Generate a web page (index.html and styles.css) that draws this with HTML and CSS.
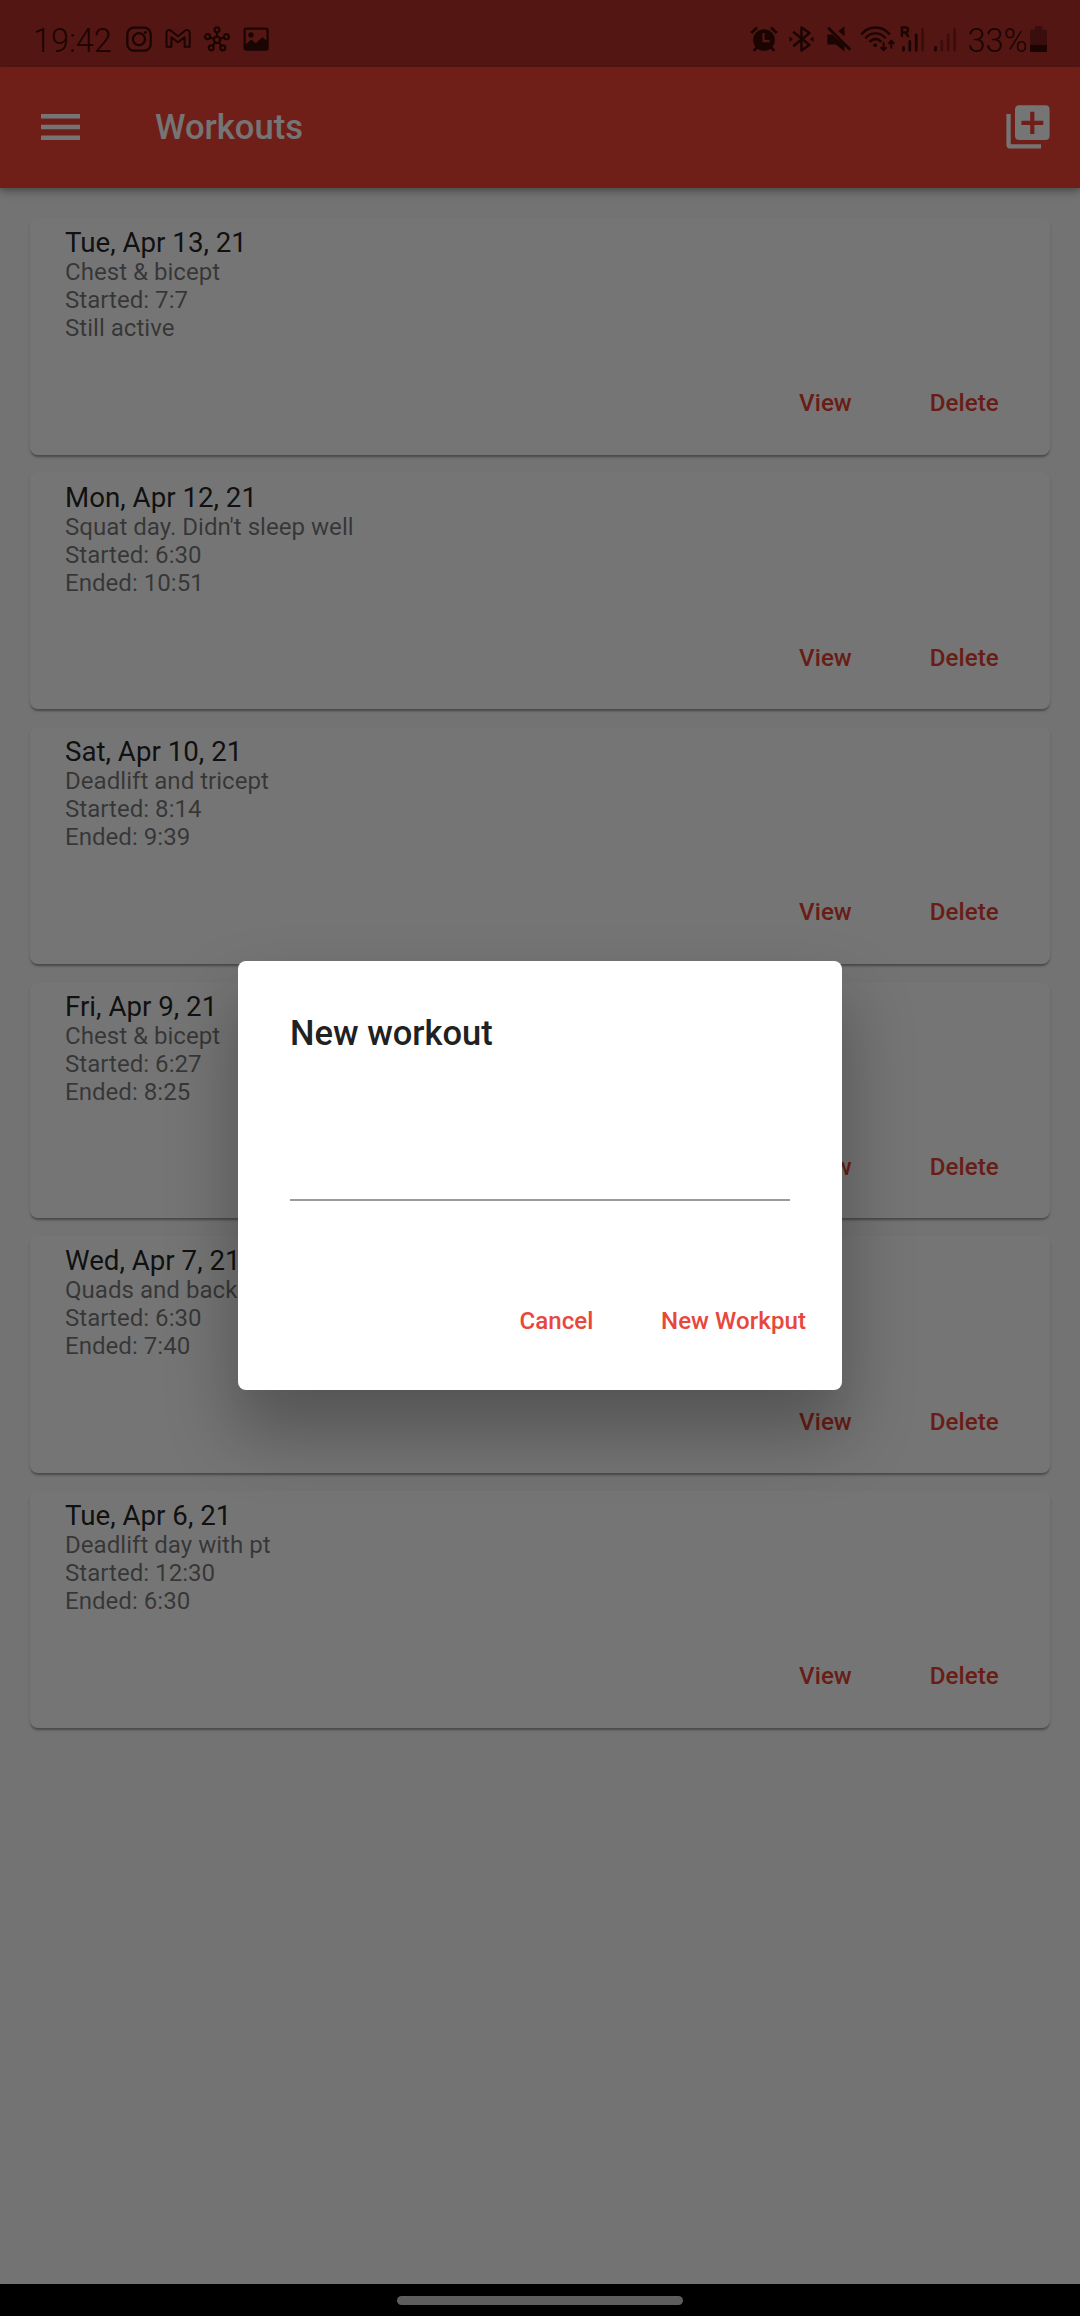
FILE: index.html
```html
<!DOCTYPE html>
<html lang="en">
<head>
<meta charset="utf-8">
<title>Workouts</title>
<link rel="stylesheet" href="styles.css">
</head>
<body>
<div class="screen">
  <div class="app">
    <div class="status">
      <span class="clock">19:42</span>
      <div class="notifications">
        <svg width="26" height="26" viewBox="0 0 26 26" fill="none" stroke="currentColor" stroke-width="2.3"><rect x="1.3" y="1.7" width="23.4" height="23" rx="6.5"/><circle cx="13" cy="13.2" r="6"/><circle cx="19.3" cy="6.4" r="1.5" fill="currentColor" stroke="none"/></svg>
        <svg width="26" height="26" viewBox="0 0 26 26" fill="none" stroke="currentColor" stroke-width="2"><path d="M1.5 20.8V6.6C1.5 4 4.3 3.3 6 4.8L13 10.3L20 4.8C21.7 3.3 24.7 4 24.7 6.6V20.8H19.6V11.2L13 16.4L6.4 11.2V20.8Z" stroke-linejoin="round"/></svg>
        <svg width="26" height="26" viewBox="0 0 26 26" fill="none" stroke="currentColor" stroke-width="2.2"><circle cx="13" cy="13.8" r="3.2"/><circle cx="13" cy="3.8" r="2.5"/><circle cx="3.6" cy="10.7" r="2.5"/><circle cx="22.4" cy="10.7" r="2.5"/><circle cx="7.2" cy="21.8" r="2.5"/><circle cx="18.8" cy="21.8" r="2.5"/><path d="M13 6.3V10.6M6 11.5L9.8 12.8M20 11.5L16.2 12.8M8.7 19.8L11.1 16.4M17.3 19.8L14.9 16.4"/></svg>
        <svg width="26" height="26" viewBox="0 0 26 26" fill="none" stroke="currentColor" stroke-width="2.2"><rect x="1.6" y="2.6" width="23" height="21" rx="1.5"/><circle cx="8" cy="9" r="2.7" fill="currentColor" stroke="none"/><path d="M2 19L8.3 13.4L12.8 17.2L19.5 11L24.5 15.8V24H2Z" fill="currentColor" stroke="none"/></svg>
      </div>
      <div class="system">
        <svg class="alarm" width="28" height="28" viewBox="0 0 28 28" fill="none" stroke="currentColor"><circle cx="14" cy="15" r="10.8" fill="currentColor" stroke="none"/><path d="M1.3 8L7 2.6M26.7 8L21 2.6" stroke-width="2.8"/><path d="M7 22L3.8 26M21 22L24.2 26" stroke-width="2.8"/><path class="cut" d="M13.5 8V16.2H19.5" stroke-width="2.2"/></svg>
        <svg class="bluetooth" width="26" height="28" viewBox="-1.5 0 26 28" fill="none" stroke="currentColor" stroke-width="2.5"><path d="M3.7 6.7L20 20L12 25.6V2.4L20 8L3.7 21.3" stroke-linejoin="round"/><path d="M0 11.5L3.4 14.2L0 17ZM24 11.5L20.6 14.2L24 17Z" fill="currentColor" stroke="none"/></svg>
        <svg class="mute" width="26" height="28" viewBox="0 0 26 28" fill="currentColor"><path d="M1.3 9.5H6L18.5 20.8V26.5L9.8 19.6H1.3Z"/><path d="M18.5 1.2V11.4L12.4 6Z"/><path d="M2.2 2.8L24.2 24.8" fill="none" stroke="currentColor" stroke-width="2.8"/></svg>
        <svg class="wifi" width="35" height="28" viewBox="0 0 35 28" fill="none" stroke="currentColor" stroke-width="2.4"><path d="M1.2 9.5C8.5 0.2 22.5 0.2 29.8 9.5M5.4 13.3C10.6 6.7 20.4 6.7 25.6 13.3M9.6 17C13 12.9 18 12.9 21.4 17"/><circle cx="15.2" cy="20.2" r="1.9" fill="currentColor" stroke="none"/><path d="M23.6 17.2V25M20.7 22.3L23.6 25.2L26.5 22.3M31.3 23.5V16M28.4 18.7L31.3 15.8L34.2 18.7" stroke-width="2"/></svg>
        <svg class="signal" width="26" height="28" viewBox="0 0 26 28" fill="none" stroke="currentColor" stroke-width="2.8" stroke-linecap="round"><path d="M3.5 22.5V25.3M9.8 16.5V25.3M16.2 9.8V25.3"/><path d="M22.6 4.5V25.3" opacity=".45"/><path d="M1.9 12V2.4H5.2C9 2.4 9 7.5 5.2 7.5H1.9M5.6 7.5L8.6 12" stroke-width="2.3" stroke-linecap="butt"/></svg>
        <svg class="signal second" width="26" height="28" viewBox="0 0 26 28" fill="none" stroke="currentColor" stroke-width="2.8" stroke-linecap="round"><path d="M3.5 22.5V25.3"/><path d="M9.8 16.5V25.3M16.2 9.8V25.3M22.6 4.5V25.3" opacity=".45"/></svg>
        <span class="percent">33%</span>
        <svg class="battery" width="17" height="28" viewBox="0 0 17 28" fill="currentColor"><path d="M5 1H12.3V4.5H15C16.4 4.5 17 5.2 17 6.5V20H0V6.5C0 5.2 .6 4.5 2 4.5H5Z" opacity=".45"/><path d="M0 20H17V25.5C17 26.6 16.6 27 15.5 27H1.5C.4 27 0 26.6 0 25.5Z"/></svg>
      </div>
    </div>
    <header class="appbar">
      <svg width="39" height="26" viewBox="0 0 39 26" fill="currentColor"><path d="M0 0H39V4.6H0ZM0 10.8H39V15.2H0ZM0 21.5H39V26H0Z"/></svg>
      <h1>Workouts</h1>
      <svg width="44" height="44" viewBox="0 0 44 44" fill="currentColor"><path fill-rule="evenodd" d="M13.2 .3H39.4Q43.6 .3 43.6 4.5V30.7Q43.6 34.9 39.4 34.9H13.2Q9 34.9 9 30.7V4.5Q9 .3 13.2 .3ZM24.2 6.8V15.7H15.4V20H24.2V29H28.4V20H37.3V15.7H28.4V6.8Z"/><path d="M.4 9H4.7V39.2H35V43.6H4.6Q.4 43.6 .4 39.4Z"/></svg>
    </header>
    <main class="list">
      <article class="card"><h2>Tue, Apr 13, 21</h2><p>Chest &amp; bicept</p><p>Started: 7:7</p><p>Still active</p><div class="actions"><span>View</span><span>Delete</span></div></article>
      <article class="card"><h2>Mon, Apr 12, 21</h2><p>Squat day. Didn't sleep well</p><p>Started: 6:30</p><p>Ended: 10:51</p><div class="actions"><span>View</span><span>Delete</span></div></article>
      <article class="card"><h2>Sat, Apr 10, 21</h2><p>Deadlift and tricept</p><p>Started: 8:14</p><p>Ended: 9:39</p><div class="actions"><span>View</span><span>Delete</span></div></article>
      <article class="card"><h2>Fri, Apr 9, 21</h2><p>Chest &amp; bicept</p><p>Started: 6:27</p><p>Ended: 8:25</p><div class="actions"><span>View</span><span>Delete</span></div></article>
      <article class="card"><h2>Wed, Apr 7, 21</h2><p>Quads and back</p><p>Started: 6:30</p><p>Ended: 7:40</p><div class="actions"><span>View</span><span>Delete</span></div></article>
      <article class="card"><h2>Tue, Apr 6, 21</h2><p>Deadlift day with pt</p><p>Started: 12:30</p><p>Ended: 6:30</p><div class="actions"><span>View</span><span>Delete</span></div></article>
    </main>
  </div>
  <div class="scrim">
    <section class="dialog">
      <h2>New workout</h2>
      <div class="field"></div>
      <div class="dialog-actions"><span>Cancel</span><span>New Workput</span></div>
    </section>
  </div>
  <div class="navbar"><div class="pill"></div></div>
</div>
</body>
</html>
```
FILE: styles.css
```css
* { box-sizing: border-box; margin: 0; padding: 0; }
body { font-family: Roboto, "Liberation Sans", sans-serif; }
h1, h2 { font-weight: 500; }
svg { display: block; flex: none; }
span { white-space: nowrap; }

.screen { position: relative; width: 1080px; height: 2316px; overflow: hidden; display: flex; flex-direction: column; }
.app { flex: 1; background: #fafafa; }

.status { height: 67px; background: #b7302b; color: #390b08; display: flex; align-items: flex-start; padding: 25px 33px 0 33px; }
.clock, .percent { font-size: 32.4px; line-height: 32px; font-weight: 360; }
.clock { width: 92.5px; }
.notifications { display: flex; gap: 13px; padding-top: 1.2px; }
.system { margin-left: auto; display: flex; }
.cut { stroke: #b7302b; }
.bluetooth { margin-left: 10px; }
.mute { margin-left: 12px; }
.wifi { margin-left: 8px; }
.signal { margin-left: 5px; }
.second { margin-left: 6px; }
.percent { width: 60px; margin-left: 10px; }
.battery { margin-left: 2.5px; }

.appbar { position: relative; height: 121px; background: #f44336; color: #fff; display: flex; align-items: center; padding: 0 30px 1px 41px; box-shadow: 0 4px 9px rgba(0,0,0,.26), 0 2px 4px rgba(0,0,0,.14); }
.appbar h1 { flex: 1; font-size: 34.6px; margin-left: 75px; margin-bottom: 1px; line-height: 40px; }

.list { display: flex; flex-direction: column; gap: 17.8px; padding: 29.8px 30px 0; }
.card { height: 236.8px; background: #fff; border-radius: 8px; padding: 9.25px 35px 0; display: flex; flex-direction: column; box-shadow: 0 3px 2px -1px rgba(0,0,0,.24), 0 2px 3px rgba(0,0,0,.16); }
.card h2 { font-weight: 400; font-size: 27.7px; line-height: 32px; margin-bottom: -1px; color: rgba(0,0,0,.87); }
.card p { font-size: 24.1px; line-height: 28px; color: rgba(0,0,0,.54); }
.actions { display: flex; justify-content: flex-end; gap: 78px; margin-top: 47.1px; padding-right: 16.3px; color: #e53f33; }
.actions span, .dialog-actions span { font-size: 24.1px; line-height: 28px; font-weight: 500; letter-spacing: .05px; }

.scrim { position: absolute; inset: 0 0 32px 0; background: rgba(0,0,0,.54); display: flex; justify-content: center; align-items: flex-start; padding-top: 961px; }
.dialog { width: 604px; height: 429px; background: #fff; border-radius: 8px; padding: 52px 36px 0 52px; display: flex; flex-direction: column; box-shadow: 0 40px 68px 4px rgba(0,0,0,.28); }
.dialog h2 { font-size: 34.5px; line-height: 40px; color: #212121; }
.field { width: 500px; height: 148px; border-bottom: 2px solid #9b9b9b; }
.dialog-actions { display: flex; justify-content: flex-end; gap: 67.5px; margin-top: 106px; color: #e8473c; }

.navbar { position: relative; height: 32px; background: #000; display: flex; justify-content: center; padding-top: 12px; }
.pill { width: 286px; height: 9px; border-radius: 5px; background: #5d5d5d; }
```
